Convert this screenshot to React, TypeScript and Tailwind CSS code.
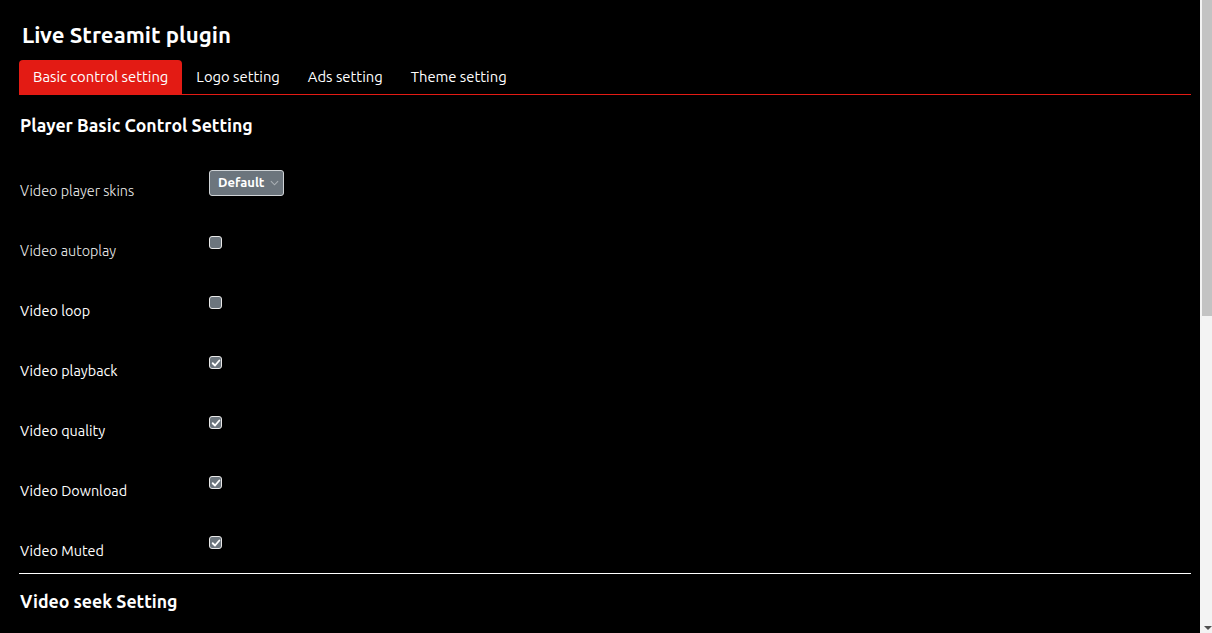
import { useState } from "react";

type Row = { label: string; kind: "select" | "check"; checked?: boolean; light?: boolean };

const basicRows: Row[] = [
  { label: "Video player skins", kind: "select", light: true },
  { label: "Video autoplay", kind: "check", checked: false, light: true },
  { label: "Video loop", kind: "check", checked: false },
  { label: "Video playback", kind: "check", checked: true },
  { label: "Video quality", kind: "check", checked: true },
  { label: "Video Download", kind: "check", checked: true },
  { label: "Video Muted", kind: "check", checked: true },
];

const tabs = ["Basic control setting", "Logo setting", "Ads setting", "Theme setting"];

function Checkbox({ initial }: { initial: boolean }) {
  const [on, setOn] = useState(initial);
  return (
    <button
      type="button"
      onClick={() => setOn((v) => !v)}
      className="flex h-[13px] w-[13px] items-center justify-center rounded-[3px] border border-[#e8e8e8] bg-[#6c757d]"
    >
      {on && (
        <svg viewBox="0 0 12 12" className="h-[10px] w-[10px]">
          <path d="M2 6.3 L4.8 9 L10 3" fill="none" stroke="#ffffff" strokeWidth="2.2" strokeLinecap="round" strokeLinejoin="round" />
        </svg>
      )}
    </button>
  );
}

function SettingRow({ row }: { row: Row }) {
  return (
    <div className="flex h-[52px]">
      <div
        className={`w-[189px] pt-[20px] text-[14.4px] leading-[20px] ${
          row.light ? "font-light text-[#f0f0f0]" : "font-normal text-white"
        }`}
      >
        {row.label}
      </div>
      {row.kind === "select" ? (
        <div className="pt-[9px]">
          <button
            type="button"
            className="flex h-[26px] w-[75px] items-center gap-[6px] rounded-[3px] border border-[#cfd3d6] bg-[#6c757d] pl-[8px] text-[13px] font-bold text-white"
          >
            Default
            <svg viewBox="0 0 10 6" className="h-[6px] w-[9px]">
              <path d="M1 1 L5 5 L9 1" fill="none" stroke="#aab0b5" strokeWidth="1.2" />
            </svg>
          </button>
        </div>
      ) : (
        <div className="pt-[15px]">
          <Checkbox initial={!!row.checked} />
        </div>
      )}
    </div>
  );
}

export default function App() {
  const [active, setActive] = useState(0);
  return (
    <div className="h-screen overflow-hidden bg-black text-white" style={{ fontFamily: '"Ubuntu", "Open Sans", "Noto Sans", sans-serif' }}>
      <div className="ml-[19px] w-[1172px]">
        <h1 className="pl-[3px] pt-[21px] text-[22.2px] font-semibold leading-[28px]">Live Streamit plugin</h1>
        <div className="mt-[11px] flex border-b border-[#e31b14]">
          {tabs.map((t, i) => (
            <button
              key={t}
              type="button"
              onClick={() => setActive(i)}
              className={`h-[34px] rounded-t-[4px] px-[14px] text-[14.8px] text-white ${
                i === active ? "bg-[#e31b14]" : ""
              }`}
            >
              {t}
            </button>
          ))}
        </div>
        <h2 className="mt-[19px] pl-[1px] text-[17.7px] font-semibold leading-[24px]">Player Basic Control Setting</h2>
        <div className="mt-[23px] flex flex-col gap-[8px] pl-[1px]">
          {basicRows.map((r) => (
            <SettingRow key={r.label} row={r} />
          ))}
        </div>
        <div className="border-b border-white" />
        <h2 className="mt-[16px] pl-[1px] text-[17.7px] font-semibold leading-[24px]">Video seek Setting</h2>
      </div>

      {/* page scrollbar */}
      <div className="fixed right-0 top-0 flex h-screen w-[12px] flex-col bg-[#f3f3f3]">
        <div className="ml-[2px] h-[316px] w-[10px] bg-[#c3c3c3]" />
        <div className="flex-1" />
        <div className="mb-[3px] ml-[4px] h-0 w-0 border-x-[4px] border-t-[4px] border-x-transparent border-t-[#505050]" />
      </div>
    </div>
  );
}
